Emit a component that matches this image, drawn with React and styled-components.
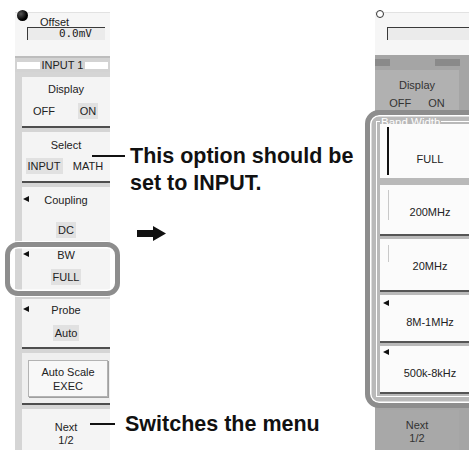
import React from 'react';
import styled, { createGlobalStyle, css } from 'styled-components';

const GlobalStyle = createGlobalStyle`
  body {
    margin: 0;
    background: #fff;
  }
`;

const Page = styled.div`
  width: 469px;
  height: 450px;
  overflow: hidden;
  display: flex;
  align-items: flex-start;
  background: #fff;
  font-family: 'Liberation Sans', Arial, sans-serif;
  font-size: 11px;
  color: #222;
`;

/* ---------- panels ---------- */

const Panel = styled.div`
  flex-shrink: 0;
  width: ${(p) => p.$w}px;
  height: 438px;
  margin-top: 12px;
  display: flex;
  flex-direction: column;
  background: ${(p) => (p.$dim ? '#a5a5a5' : '#d5d5d5')};
`;

const TopArea = styled.div`
  height: ${(p) => p.$h}px;
  box-sizing: border-box;
  flex-shrink: 0;
  background: #f6f6f6;
  border-top: 1px solid #e2e2e2;
`;

const KnobRow = styled.div`
  display: flex;
  align-items: flex-start;
  height: 14px;
`;

const Knob = styled.span`
  width: ${(p) => (p.$filled ? 11 : 8)}px;
  height: ${(p) => (p.$filled ? 11 : 8)}px;
  border-radius: 50%;
  box-sizing: border-box;
  margin: -3px 0 0 ${(p) => (p.$filled ? 2 : 1)}px;
  background: ${(p) => (p.$filled ? 'radial-gradient(circle at 35% 35%, #555, #000 60%)' : '#fff')};
  border: ${(p) => (p.$filled ? 'none' : '1px solid #333')};
`;

const KnobLabel = styled.span`
  margin: 2px 0 0 12px;
  line-height: 14px;
`;

const ReadBox = styled.div`
  margin: ${(p) => p.$mt}px 0 0 12px;
  width: ${(p) => p.$w}px;
  height: 13px;
  box-sizing: border-box;
  border-top: 1.5px solid #3a3a3a;
  border-left: 1.5px solid #3a3a3a;
  background: #ebebeb;
  text-align: right;
  padding-right: 13px;
  font-family: 'DejaVu Sans Mono', 'Liberation Mono', monospace;
  font-size: 11px;
  line-height: 12px;
`;

const Band = styled.div`
  height: 2px;
  flex-shrink: 0;
  background: #bdbdbd;
`;

const TitleBar = styled.div`
  height: 14px;
  flex-shrink: 0;
  display: grid;
  grid-template-columns: 23px 1fr 23px;
  align-items: center;
  padding: 0 2px;
  background: #d3d3d3;
  text-align: center;
  line-height: 14px;
`;

const TitleTab = styled.span`
  height: 7px;
  background: #fff;
`;

const MenuList = styled.div`
  flex: 1;
  display: flex;
  flex-direction: column;
  gap: 4px;
  padding: 5px 0 0 7px;
`;

const ringCss = css`
  &::after {
    content: '';
    position: absolute;
    top: -3px;
    bottom: -3px;
    left: -17px;
    right: -10px;
    border: 5px solid #8d8d8d;
    border-radius: 13px;
    box-shadow: inset 0 0 0 1.5px #fff, 0 0 0 1px #fff;
    pointer-events: none;
    z-index: 2;
  }
`;

const MenuBtn = styled.div`
  position: relative;
  height: ${(p) => p.$h}px;
  flex-shrink: 0;
  box-sizing: border-box;
  padding-top: ${(p) => p.$pt}px;
  background: #f4f4f4;
  border-bottom: ${(p) => (p.$sep ? '2px solid #4e4e4e' : 'none')};
  ${(p) => p.$ring && ringCss}
`;

const LabelRow = styled.div`
  display: grid;
  grid-template-columns: 14px 1fr 14px;
  align-items: center;
  line-height: 14px;
  text-align: center;
`;

const SideArrow = styled.span`
  justify-self: start;
  width: 0;
  height: 0;
  margin: ${(p) => p.$mt ?? -3}px 0 0 ${(p) => p.$ml ?? 1}px;
  border-top: 3.5px solid transparent;
  border-bottom: 3.5px solid transparent;
  border-right: 6px solid #111;
`;

const ValueRow = styled.div`
  display: grid;
  grid-template-columns: ${(p) => (p.$pair ? '1fr 1fr' : '1fr')};
  justify-items: center;
  margin-top: ${(p) => p.$gap}px;
`;

const Value = styled.span`
  line-height: 16px;
  padding: 0 2px;
  background: ${(p) => (p.$on ? '#e1e1e1' : 'transparent')};
`;

const ExecSection = styled.div`
  height: 52px;
  flex-shrink: 0;
  box-sizing: border-box;
  padding: 7px 2px 0 6px;
  background: #efefef;
  border-bottom: 2px solid #4e4e4e;
`;

const ExecBox = styled.div`
  height: 37px;
  box-sizing: border-box;
  border: 1px solid #b3b3b3;
  background: #f8f8f8;
  box-shadow: 1px 1px 0 #a0a0a0;
  display: flex;
  flex-direction: column;
  align-items: center;
  justify-content: center;
  line-height: 14px;
`;

const NextBtn = styled.div`
  flex: 1;
  width: ${(p) => (p.$w ? `${p.$w}px` : 'auto')};
  margin-top: ${(p) => p.$mt || 0}px;
  padding-top: ${(p) => p.$pt}px;
  background: ${(p) => (p.$dim ? '#a8a8a8' : '#f4f4f4')};
  color: ${(p) => (p.$dim ? '#333' : '#222')};
  text-align: center;
  line-height: 12.5px;
`;

/* ---------- dimmed right panel ---------- */

const DimHeader = styled.div`
  height: 15px;
  width: 85px;
  flex-shrink: 0;
  display: flex;
  justify-content: space-between;
  align-items: center;
`;

const DimTab = styled.span`
  width: ${(p) => p.$w}px;
  height: 7px;
  background: #8a8a8a;
`;

const DimButton = styled.div`
  height: 40px;
  width: 84px;
  flex-shrink: 0;
  box-sizing: border-box;
  padding-top: 8px;
  background: #b1b1b1;
  color: #333;
  text-align: center;
  line-height: 14px;
`;

const DimValues = styled.div`
  display: flex;
  justify-content: center;
  gap: 17px;
  margin-top: 5px;
  line-height: 13px;
`;

const Popup = styled.div`
  height: 298px;
  width: 120px;
  flex-shrink: 0;
  margin-left: -10px;
  box-sizing: border-box;
  padding: 6px 0 0 6px;
  border: 5px solid #8d8d8d;
  border-radius: 14px;
  background: #b9b9b9;
  box-shadow: inset 0 0 0 1.5px #fff;
`;

const Group = styled.div`
  border-left: 1px solid #fff;
  border-bottom: 1px solid #fff;
  padding-bottom: 2px;
`;

const GroupTitle = styled.div`
  display: flex;
  align-items: center;
  height: 1px;
`;

const TitleLine = styled.span`
  height: 1px;
  background: #fff;
  flex: ${(p) => (p.$grow ? 1 : 'none')};
  width: ${(p) => (p.$grow ? 'auto' : '3px')};
`;

const Legend = styled.span`
  color: #fff;
  font-size: 11.5px;
  line-height: 12px;
  padding: 0 1px;
  white-space: nowrap;
`;

const BandList = styled.div`
  display: flex;
  flex-direction: column;
  padding: 2px 0 0 3px;
`;

const BandBtn = styled.div`
  height: ${(p) => p.$h}px;
  margin-top: ${(p) => p.$mt}px;
  flex-shrink: 0;
  box-sizing: border-box;
  display: grid;
  grid-template-columns: 10px 1fr 10px;
  align-items: start;
  background: #fbfbfb;
  border-bottom: ${(p) => (p.$sep ? '2px solid #555' : 'none')};
`;

const Bar = styled.span`
  justify-self: end;
  width: ${(p) => (p.$dark ? 2 : 1.5)}px;
  height: ${(p) => p.$h}px;
  margin: ${(p) => p.$mt}px 1px 0 0;
  background: ${(p) => (p.$dark ? '#111' : '#c9c9c9')};
`;

const BandLabel = styled.span`
  grid-column: 2;
  padding-top: ${(p) => p.$pt}px;
  text-align: center;
  line-height: 14px;
`;

/* ---------- callouts ---------- */

const Middle = styled.div`
  flex-shrink: 0;
  width: 265px;
  display: flex;
  flex-direction: column;
  align-items: flex-start;
`;

const Callout = styled.div`
  position: relative;
  z-index: 3;
  display: flex;
  align-items: flex-start;
  margin-top: ${(p) => p.$mt}px;
  gap: ${(p) => p.$gap}px;
`;

const Leader = styled.span`
  flex-shrink: 0;
  width: ${(p) => p.$w}px;
  height: 1.5px;
  margin: ${(p) => p.$top}px 0 0 ${(p) => p.$ml}px;
  background: #111;
`;

const Note = styled.div`
  font-family: 'Liberation Sans', Arial, sans-serif;
  font-weight: bold;
  font-size: 21.5px;
  line-height: 27px;
  color: #111;
  white-space: nowrap;
`;

const ArrowSvg = styled.svg`
  display: block;
  margin: 29px 0 0 27px;
`;

function App() {
  return (
    <>
      <GlobalStyle />
      <Page>
        <Panel $w={95} style={{ marginLeft: 15 }}>
          <TopArea $h={44}>
            <KnobRow>
              <Knob $filled />
              <KnobLabel>Offset</KnobLabel>
            </KnobRow>
            <ReadBox $mt={0} $w={78}>0.0mV</ReadBox>
          </TopArea>
          <Band />
          <TitleBar>
            <TitleTab />
            <span>INPUT 1</span>
            <TitleTab />
          </TitleBar>
          <MenuList>
            <MenuBtn $h={51} $pt={5} $sep>
              <LabelRow><span /><span>Display</span><span /></LabelRow>
              <ValueRow $pair $gap={7}>
                <Value>OFF</Value>
                <Value $on>ON</Value>
              </ValueRow>
            </MenuBtn>
            <MenuBtn $h={51} $pt={6} $sep>
              <LabelRow><span /><span>Select</span><span /></LabelRow>
              <ValueRow $pair $gap={6}>
                <Value $on>INPUT</Value>
                <Value>MATH</Value>
              </ValueRow>
            </MenuBtn>
            <MenuBtn $h={54} $pt={6}>
              <LabelRow><SideArrow /><span>Coupling</span><span /></LabelRow>
              <ValueRow $gap={15}>
                <Value $on>DC</Value>
              </ValueRow>
            </MenuBtn>
            <MenuBtn $h={50} $pt={3} $sep $ring>
              <LabelRow><SideArrow /><span>BW</span><span /></LabelRow>
              <ValueRow $gap={7}>
                <Value $on>FULL</Value>
              </ValueRow>
            </MenuBtn>
            <MenuBtn $h={50} $pt={4} $sep>
              <LabelRow><SideArrow /><span>Probe</span><span /></LabelRow>
              <ValueRow $gap={8}>
                <Value $on>Auto</Value>
              </ValueRow>
            </MenuBtn>
            <ExecSection>
              <ExecBox>
                <span>Auto Scale</span>
                <span>EXEC</span>
              </ExecBox>
            </ExecSection>
            <NextBtn $pt={12}>
              Next
              <br />
              1/2
            </NextBtn>
          </MenuList>
        </Panel>

        <Middle>
          <Callout $mt={143} $gap={5}>
            <Leader $w={33} $ml={-18} $top={12} />
            <Note>
              This option should be
              <br />
              set to INPUT.
            </Note>
          </Callout>
          <ArrowSvg width="29" height="15" viewBox="0 0 29 15">
            <path d="M0 4 H16 V0 L29 7.5 L16 15 V11 H0 Z" fill="#111" />
          </ArrowSvg>
          <Callout $mt={170} $gap={10}>
            <Leader $w={25} $ml={-20} $top={12} />
            <Note>Switches the menu</Note>
          </Callout>
        </Middle>

        <Panel $w={110} $dim>
          <TopArea $h={43}>
            <KnobRow>
              <Knob />
            </KnobRow>
            <ReadBox $mt={0} $w={98} />
          </TopArea>
          <DimHeader>
            <DimTab $w={15} />
            <DimTab $w={25} />
          </DimHeader>
          <DimButton>
            Display
            <DimValues>
              <span>OFF</span>
              <span>ON</span>
            </DimValues>
          </DimButton>
          <Popup>
            <Group>
              <GroupTitle>
                <TitleLine />
                <Legend>Band Width</Legend>
                <TitleLine $grow />
              </GroupTitle>
              <BandList>
                <BandBtn $h={54} $mt={0}>
                  <Bar $dark $mt={3} $h={48} />
                  <BandLabel $pt={28}>FULL</BandLabel>
                </BandBtn>
                <BandBtn $h={51} $mt={7} $sep>
                  <Bar $mt={5} $h={30} />
                  <BandLabel $pt={20}>200MHz</BandLabel>
                </BandBtn>
                <BandBtn $h={53} $mt={3} $sep>
                  <Bar $mt={6} $h={17} />
                  <BandLabel $pt={20}>20MHz</BandLabel>
                </BandBtn>
                <BandBtn $h={48} $mt={3} $sep>
                  <SideArrow $mt={5} $ml={3} />
                  <BandLabel $pt={20}>8M-1MHz</BandLabel>
                </BandBtn>
                <BandBtn $h={48} $mt={3} $sep>
                  <SideArrow $mt={3} $ml={3} />
                  <BandLabel $pt={20}>500k-8kHz</BandLabel>
                </BandBtn>
              </BandList>
            </Group>
          </Popup>
          <NextBtn $dim $w={84} $mt={2} $pt={9}>
            Next
            <br />
            1/2
          </NextBtn>
        </Panel>
      </Page>
    </>
  );
}

export default App;
